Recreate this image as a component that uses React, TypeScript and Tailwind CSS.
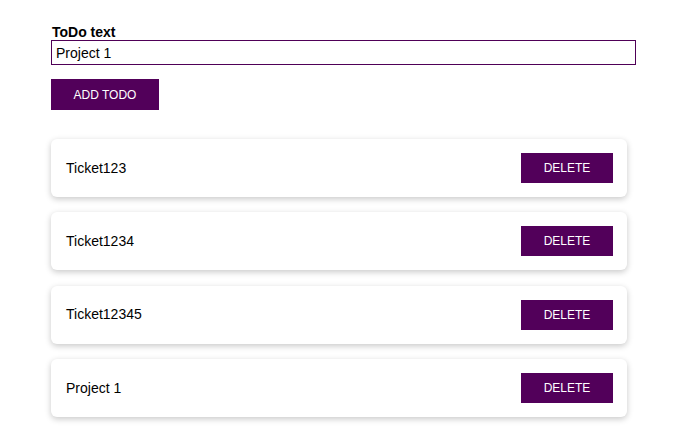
import React, { useState } from 'react';

interface Todo {
  id: number;
  text: string;
}

const App = () => {
  const [text, setText] = useState('Project 1');
  const [todos, setTodos] = useState<Todo[]>([
    { id: 1, text: 'Ticket123' },
    { id: 2, text: 'Ticket1234' },
    { id: 3, text: 'Ticket12345' },
    { id: 4, text: 'Project 1' },
  ]);

  const addTodo = () => {
    if (!text.trim()) return;
    setTodos([...todos, { id: Date.now(), text }]);
  };

  const removeTodo = (id: number) => setTodos(todos.filter((t) => t.id !== id));

  return (
    <div className="min-h-screen bg-white pl-[51px] pr-[47px] pt-[24px] font-['Liberation_Sans',Arial,sans-serif] text-black">
      <label className="block text-[14px] font-bold leading-[16px] pl-px">ToDo text</label>
      <input
        value={text}
        onChange={(e) => setText(e.target.value)}
        className="block w-full h-[25px] border border-[#4f0057] px-[4px] text-[14px] outline-none"
      />
      <button
        onClick={addTodo}
        className="mt-[14px] w-[108px] h-[31px] bg-[#52005a] text-white text-[12px] font-medium uppercase"
      >
        Add Todo
      </button>
      <ul className="mt-[29px] flex flex-col gap-[15.4px] w-[576px]">
        {todos.map((todo) => (
          <li
            key={todo.id}
            className="flex items-center justify-between h-[58px] pl-[15px] pr-[14px] rounded-md bg-white shadow-[0_2px_6px_rgba(0,0,0,0.22)]"
          >
            <span className="text-[14px]">{todo.text}</span>
            <button
              onClick={() => removeTodo(todo.id)}
              className="w-[92px] h-[30px] bg-[#52005a] text-white text-[12px] font-medium uppercase"
            >
              Delete
            </button>
          </li>
        ))}
      </ul>
    </div>
  );
};

export default App;
